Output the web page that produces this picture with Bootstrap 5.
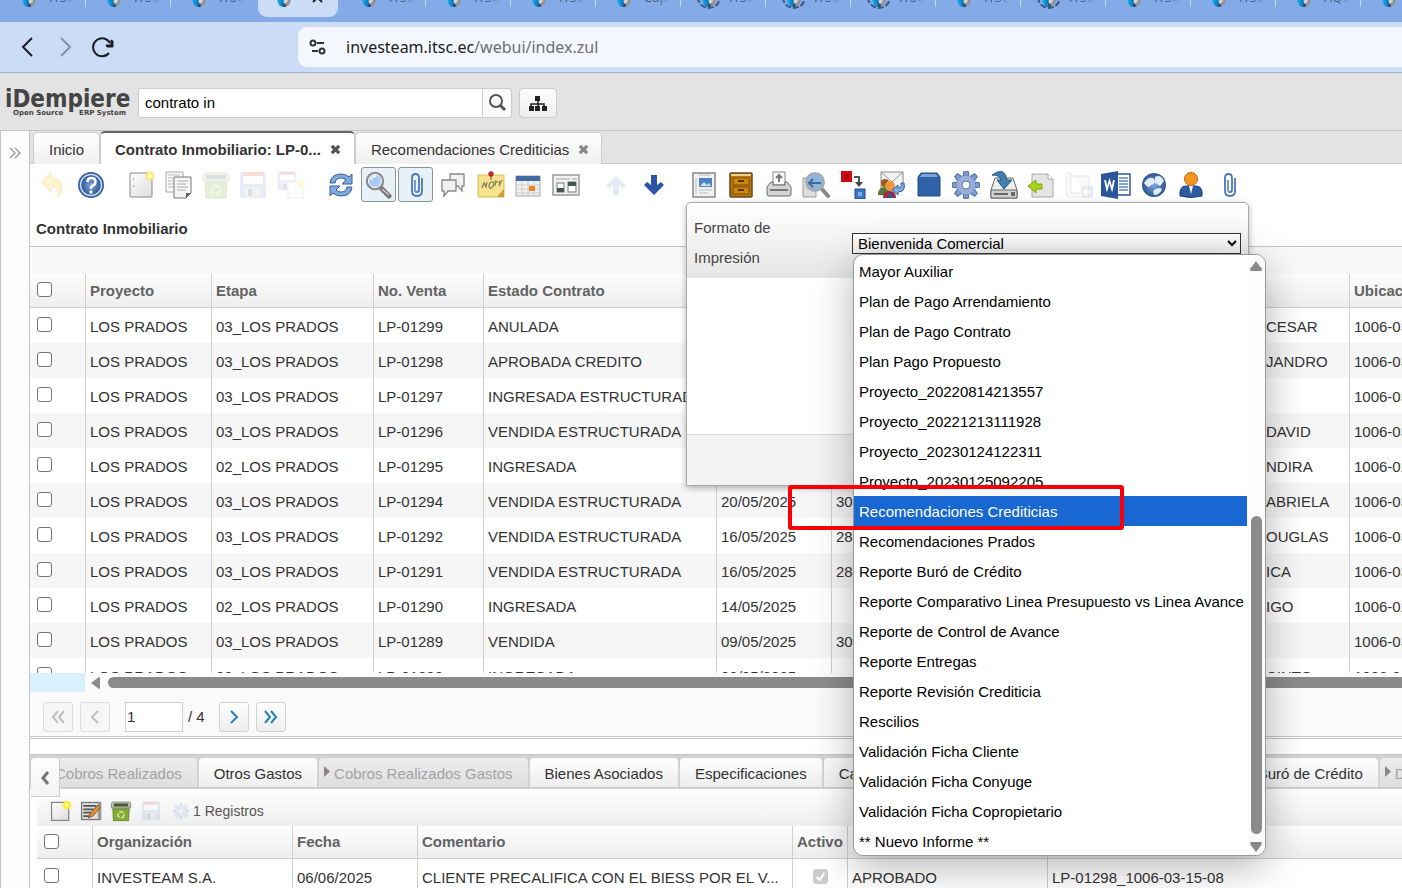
<!DOCTYPE html>
<html lang="es">
<head>
<meta charset="utf-8">
<meta name="viewport" content="width=device-width, initial-scale=1">
<title>iDempiere</title>
<link href="https://cdn.jsdelivr.net/npm/bootstrap@5.3.0/dist/css/bootstrap.min.css" rel="stylesheet">
<style>
  body { font-family: "Liberation Sans", Arial, sans-serif; font-size: 15px; line-height: 20px; color: #333; background: #fff; }
  button { font: inherit; color: inherit; }
  .app { height: 100vh; overflow: hidden; }

  /* browser chrome */
  .strip { height: 22px; background: #85aae8; padding-left: 1px; overflow: hidden; }
  .btab { flex: 0 0 85px; height: 22px; position: relative; padding-left: 18px; font: 13px/14px "Open Sans", sans-serif; color: #44597c; text-decoration: none; }
  .btab svg { width: 20px; height: 22px; flex: none; overflow: visible; }
  .btab span { margin: -10px 0 0 10px; white-space: nowrap; width: 26px; overflow: hidden; -webkit-mask-image: linear-gradient(90deg, #000 50%, transparent); mask-image: linear-gradient(90deg, #000 50%, transparent); }
  .btab::after { content: ""; position: absolute; right: 0; top: 0; width: 1px; height: 7px; background: #c9dbf6; }
  .btab.no-line::after { display: none; }
  .btab.current::before { content: ""; position: absolute; left: 2px; right: 3px; top: 0; height: 17px; background: #cbdcf6; border-radius: 0 0 9px 9px; }
  .btab.current svg { position: relative; }
  .addr { height: 51px; background: #cbdcf6; border-bottom: 1px solid #9fb4d6; }
  .addr-nav { width: 298px; padding-left: 16px; gap: 14px; }
  .addr-nav button, .plain { border: 0; background: none; padding: 0; }
  .addr-nav svg { display: block; width: 24px; height: 24px; }
  .url { height: 40px; background: #f4f7fd; border-radius: 9px 0 0 9px; padding-left: 10px; gap: 18px; font: 16px/22px "Noto Sans", "Open Sans", sans-serif; color: #6a6f78; }
  .url b { font-weight: 400; color: #1c1e22; }

  /* application header */
  .head { height: 57px; background: #e3e3e3; padding: 2px 0 0 5px; }
  .logo { width: 133px; font-family: "DejaVu Sans Condensed", "DejaVu Sans", sans-serif; font-stretch: condensed; font-weight: 700; font-size: 24px; line-height: 20px; color: #444; }
  .logo small { margin-left: 8px; font: 700 7px/8px "DejaVu Sans", sans-serif; width: 113px; display: flex; justify-content: space-between; }
  .find { width: 345px; height: 30px; border: 1px solid #ccc; border-radius: 3px 0 0 3px; padding: 0 6px; color: #000; background: #fff; }
  .find-btn { width: 29px; height: 30px; border: 1px solid #ccc; border-left: 0; border-radius: 0 3px 3px 0; background: #fafafa; padding: 0; }
  .map-btn { width: 38px; height: 30px; border: 1px solid #ccc; border-radius: 4px; background: linear-gradient(#fefefe, #eee); padding: 0; margin-left: 7px; }

  .rail { flex: 0 0 30px; background: #fcfcfc; border: solid #c5c5c5; border-width: 1px 1px 0 1px; padding-top: 11px; color: #999; }
  .main-col { border-top: 1px solid #c5c5c5; min-width: 0; }

  .wtabs { background: #e3e3e3; height: 33px; padding-left: 3px; border-bottom: 1px solid #ccc; }
  .wtab { height: 32px; margin-top: 1px; border: 1px solid #ccc; border-bottom: 0; border-radius: 5px 5px 0 0; background: linear-gradient(#fefefe, #f0f0f0); padding: 2px 15px 0; gap: 9px; color: #333; white-space: nowrap; }
  .wtab.on { height: 33px; margin-top: 0; border-top: 2px solid #666; background: #fff; font-weight: 700; padding: 2px 13px 0 14px; }
  .wtab.last { padding-right: 12px; }

  .tools { height: 39px; padding: 3px 0 0 5px; gap: 15px; position: relative; }
  .tgroup { display: flex; justify-content: space-between; flex: none; }
  .g2 { width: 73px; } .g5 { width: 185px; } .g7 { width: 260px; } .g15 { width: 560px; }
  .tgroup button { width: 35px; height: 35px; border: 1px solid transparent; border-radius: 3px; background: none; padding: 0; display: flex; align-items: center; justify-content: center; }
  .tgroup button.on { border-color: #8a949c; background: #e8f1f8; }
  .tgroup svg { width: 28px; height: 28px; flex: none; }
  .dim { opacity: .18; }

  .win-title { height: 44px; font-weight: 700; padding: 8px 6px 0; border-bottom: 1px solid #c5c5c5; }
  .group-bar { height: 27px; background: #f9f9f9; }

  /* data grids */
  .pane { height: 399px; overflow: hidden; }
  .dgrid { table-layout: fixed; border-collapse: separate; border-spacing: 0; width: 100%; }
  .dgrid th { height: 34px; padding: 0 4px; font-weight: 700; color: #636363; background: linear-gradient(#fefefe, #eee); border-bottom: 1px solid #cfcfcf; }
  .dgrid td { height: 35px; padding: 3px 4px 0; }
  .dgrid th, .dgrid td { white-space: nowrap; overflow: hidden; border-left: 1px solid #cfcfcf; }
  .dgrid th:first-child, .dgrid td:first-child { border-left: 0; padding: 0 7px; vertical-align: middle; }
  .dgrid tbody tr:nth-child(even) td { background: #f6f6f6; }
  .wide { min-width: 1469px; }
  .detail .dgrid th { height: 33px; }
  .tick { appearance: none; display: block; width: 15px; height: 15px; margin: 0 0 2px; border: 1px solid #767676; border-radius: 3px; background: #fff; }
  .tick:checked { border-color: #ccc; background: #ccc url("data:image/svg+xml,%3Csvg xmlns='http://www.w3.org/2000/svg' viewBox='0 0 13 13'%3E%3Cpath d='M2.5 7l3 3 5-7' fill='none' stroke='%23fff' stroke-width='2'/%3E%3C/svg%3E"); margin: 0 auto 4px; }

  .hscroll { height: 19px; background: #fcfcfc; }
  .hscroll i { flex: 0 0 55px; height: 19px; background: #d9f1fd; }
  .hscroll svg { flex: none; width: 9px; height: 12px; margin: 0 8px 0 6px; }
  .hscroll b { height: 11px; background: #8b8b8b; border-radius: 6px 0 0 6px; }
  .pager { height: 45px; background: #fafafa; border-bottom: 1px solid #c5c5c5; padding: 5px 0 0 13px; }
  .pager button { width: 30px; height: 30px; border: 1px solid #cfcfcf; border-radius: 3px; background: linear-gradient(#fefefe, #eee); padding: 0; margin-right: 7px; color: #2184ba; display: flex; align-items: center; justify-content: center; }
  .pager button:disabled { color: #c0c0c0; border-color: #ddd; background: #f6f6f6; }
  .pager input { width: 58px; height: 30px; border: 1px solid #cfcfcf; padding: 0 1px; margin: 0 5px 0 8px; color: #333; }
  .pager span { width: 31px; }
  .splitter { height: 17px; margin-top: 1px; border: solid #c5c5c5; border-width: 1px 0; background: #fff; }

  /* detail tabs */
  .dtabs { height: 34px; background: #d3d3d3; padding: 3px 0 0 10px; gap: 2px; border-bottom: 2px solid #cfcfcf; position: relative; }
  .dtab { flex: none; height: 29px; padding: 0 15px; border-radius: 4px 4px 0 0; background: linear-gradient(#fefefe, #eee); color: #333; line-height: 31px; text-decoration: none; position: relative; }
  .dtab.off { background: linear-gradient(#ededed, #dedede); color: #a2a2a2; }
  .dtab svg { position: absolute; left: 5px; top: 8px; width: 6px; height: 11px; }
  .spread { width: 417px; }
  .back { position: absolute; left: 1px; top: 3px; width: 29px; height: 39px; border: 1px solid #ccc; border-top: 0; border-left: 0; border-radius: 4px 4px 0 0; background: linear-gradient(#fefefe, #f3f3f3); padding: 0; z-index: 1; }
  .detail { margin-left: 7px; }
  .dtools { height: 37px; background: linear-gradient(#fff, #eee); padding: 6px 0 0 12px; font-size: 14px; color: #555; }
  .dtools button + button { margin-left: 6px; }
  .dtools svg { width: 24px; height: 24px; display: block; }

  /* print format dialog */
  .dialog-pop { position: absolute; left: 656px; top: 38px; width: 563px; height: 284px; z-index: 5; background: #fff; border: 1px solid #aaa; border-radius: 5px 5px 0 0; box-shadow: 0 2px 6px rgba(0,0,0,.3); }
  .dialog-top { height: 75px; background: linear-gradient(#fff, #e6e6e6); padding: 10px 7px 0 7px; border-radius: 5px 5px 0 0; }
  .dialog-top label { width: 158px; padding-right: 60px; line-height: 30px; color: #444; }
  .dialog-top select { height: 21px; margin-top: 20px; border: 1px solid #333; border-radius: 0; background: linear-gradient(#fff, #f0f0f0); font-size: 15px; line-height: 19px; padding: 0 1px; color: #000; }
  .dialog-foot { height: 51px; margin-top: 156px; background: #f3f3f3; border-top: 1px solid #d8d8d8; }
  .choices { position: absolute; left: 166px; top: 51px; width: 413px; height: 602px; background: #fff; border: 1px solid #999; border-radius: 10px; box-shadow: 0 10px 40px rgba(0,0,0,.3); overflow: hidden; display: flex; color: #000; }
  .choices ul { flex: 1; margin: 1px 0 0; padding: 0; list-style: none; }
  .choices li { height: 30px; line-height: 31px; padding-left: 5px; white-space: nowrap; }
  .choices li.sel { background: #1967d2; color: #fff; }
  .vscroll { flex: 0 0 18px; background: #fcfcfc; padding: 6px 0 3px; }
  .vscroll i { width: 11px; height: 318px; border-radius: 6px; background: #8b8b8b; margin-top: auto; margin-bottom: 8px; }
  .frame-mark { position: absolute; left: 101px; top: 282px; width: 336px; height: 45px; border: 4px solid #f80008; border-radius: 3px; z-index: 7; pointer-events: none; }
</style>
</head>
<body>
<svg width="0" height="0" class="position-absolute" aria-hidden="true">
  <defs>
    <linearGradient id="fav" x1="0" x2="1"><stop offset="0" stop-color="#12b4f6"/><stop offset=".4" stop-color="#0f7cc0"/><stop offset=".55" stop-color="#2b4258"/><stop offset=".7" stop-color="#999"/><stop offset="1" stop-color="#8b8b8b"/></linearGradient>
    <linearGradient id="paper" x2="1" y2="1"><stop stop-color="#fff"/><stop offset="1" stop-color="#dcdcdc"/></linearGradient>
    <radialGradient id="blueball"><stop stop-color="#7fa8dc"/><stop offset="1" stop-color="#2b5592"/></radialGradient>
    <symbol id="i-fav" viewBox="0 0 20 22"><path d="M3-4C3 3 5 7 10 7s7-4 7-11z" fill="url(#fav)"/><path d="M10-1c-1 3 0 4 1 5 2-1 3-3 3-5z" fill="#cfd3d8"/></symbol>
    <symbol id="i-favl" viewBox="0 0 20 22" overflow="visible"><use href="#i-fav" width="20" height="22"/><path d="M-1-3a11 11 0 0 0 22 0" fill="none" stroke="#40587f" stroke-width="2" stroke-dasharray="6 2"/></symbol>
    <symbol id="i-page" viewBox="0 0 28 28"><rect x="3" y="2" width="22" height="24" rx="1" fill="url(#paper)" stroke="#888"/><path d="M6 8h1M6 15h1" stroke="#aaa" stroke-width="2"/><circle cx="23" cy="5" r="4.500" fill="#f8ec75"/><circle cx="23" cy="5" r="2" fill="#fffce0"/></symbol>
    <symbol id="i-floppy" viewBox="0 0 28 28"><rect x="1" y="1" width="26" height="26" rx="2" fill="#7aa0dc"/><rect x="4" y="2" width="20" height="11" fill="#fff"/><rect x="4" y="1" width="20" height="4" fill="#e53b30"/><rect x="6" y="16" width="16" height="10" fill="#bbb"/><rect x="9" y="18" width="4" height="7" fill="#456"/></symbol>
    <symbol id="i-trash" viewBox="0 0 28 28"><path d="M3 11h22l-1 16H4z" fill="#86ac35" stroke="#59771d"/><path d="M1 5q0-3 3-3h20q3 0 3 3v5H1z" fill="#b5c7a0" stroke="#777"/><path d="M5 4h18l1 4H4z" fill="#49533f"/><circle cx="14" cy="19" r="4" fill="none" stroke="#d8ecb0" stroke-width="2" stroke-dasharray="6 2"/></symbol>
    <symbol id="i-clip" viewBox="0 0 28 28"><path d="M13 9v10q0 2 2 2t2-2V7q0-4-3.500-4T10 7v13q0 5 5 5t5-5V7" fill="none" stroke="#4a78b8" stroke-width="1.800"/><path d="M13 9v10q0 2 2 2" fill="none" stroke="#8fb1dd"/></symbol>
    <symbol id="i-gear" viewBox="0 0 28 28"><g fill="#7f9acb" stroke="#4a6ea9"><g id="tth"><path d="M11 5l1-5h4l1 5zM11 23l1 5h4l1-5z"/></g><use href="#tth" transform="rotate(45 14 14)"/><use href="#tth" transform="rotate(90 14 14)"/><use href="#tth" transform="rotate(135 14 14)"/></g><circle cx="14" cy="14" r="9.500" fill="#9aaed8"/><circle cx="14" cy="14" r="4" fill="#fff" stroke="#5b7bb3"/></symbol>
    <symbol id="i-x" viewBox="0 0 12 12"><path d="M2 2l8 8M10 2l-8 8" stroke="currentColor" stroke-width="3.600"/></symbol>
  </defs>
</svg>

<div class="app d-flex flex-column">
  <nav class="strip d-flex flex-shrink-0" aria-label="Pestañas del navegador">
    <a href="#" class="btab d-flex"><svg><use href="#i-fav"/></svg><span>ITSC</span></a>
    <a href="#" class="btab d-flex"><svg><use href="#i-fav"/></svg><span>ITSC</span></a>
    <a href="#" class="btab d-flex no-line"><svg><use href="#i-fav"/></svg><span>ITSC</span></a>
    <a href="#" class="btab d-flex no-line current"><svg><use href="#i-fav"/></svg><svg viewBox="0 0 20 22" class="ms-3"><path d="M3-7l9 9M12-7L3 2" stroke="#222" stroke-width="2"/></svg></a>
    <a href="#" class="btab d-flex"><svg><use href="#i-fav"/></svg><span>ITSC</span></a>
    <a href="#" class="btab d-flex"><svg><use href="#i-fav"/></svg><span>ITSC</span></a>
    <a href="#" class="btab d-flex"><svg><use href="#i-fav"/></svg><span>ITSC</span></a>
    <a href="#" class="btab d-flex"><svg><use href="#i-fav"/></svg><span>Capa</span></a>
    <a href="#" class="btab d-flex"><svg><use href="#i-favl"/></svg><span>ITSC</span></a>
    <a href="#" class="btab d-flex"><svg><use href="#i-favl"/></svg><span>ITSC</span></a>
    <a href="#" class="btab d-flex"><svg><use href="#i-favl"/></svg><span>ITSC</span></a>
    <a href="#" class="btab d-flex"><svg><use href="#i-fav"/></svg><span>ITSC</span></a>
    <a href="#" class="btab d-flex"><svg><use href="#i-favl"/></svg><span>ITSC</span></a>
    <a href="#" class="btab d-flex"><svg><use href="#i-fav"/></svg><span>ITSC</span></a>
    <a href="#" class="btab d-flex"><svg><use href="#i-fav"/></svg><span>ITSC</span></a>
    <a href="#" class="btab d-flex"><svg><use href="#i-fav"/></svg><span>AQUA</span></a>
    <a href="#" class="btab d-flex"><svg><use href="#i-fav"/></svg></a>
  </nav>
  <div class="addr d-flex align-items-center flex-shrink-0">
    <div class="addr-nav d-flex flex-shrink-0">
      <button type="button" aria-label="Atrás"><svg viewBox="0 0 24 24" fill="none" stroke="#1b1d21" stroke-width="2"><path d="M16 3l-9 9 9 9"/></svg></button>
      <button type="button" aria-label="Adelante"><svg viewBox="0 0 24 24" fill="none" stroke="#8290a8" stroke-width="2"><path d="M7 3l9 9-9 9"/></svg></button>
      <button type="button" aria-label="Recargar"><svg viewBox="0 0 24 24" fill="none" stroke="#1b1d21" stroke-width="2"><path d="M17 18a9 9 0 1 1 1-10"/><path d="M14 10h5V5l2 1v6h-6z" fill="#1b1d21" stroke-width="1"/></svg></button>
    </div>
    <div class="url d-flex align-items-center flex-grow-1">
      <svg width="20" height="20" viewBox="0 0 20 20" fill="none" stroke="#333" stroke-width="2"><circle cx="5" cy="6" r="2.500"/><path d="M9 6h7M4 14h6"/><circle cx="14" cy="14" r="2.500"/></svg>
      <span><b>investeam.itsc.ec</b>/webui/index.zul</span>
    </div>
  </div>

  <header class="head d-flex align-items-center flex-shrink-0">
    <div class="logo">iDempiere<small><span>Open Source</span><span>ERP System</span></small></div>
    <input class="find" type="text" value="contrato in" aria-label="Buscar">
    <button type="button" class="find-btn" aria-label="Buscar"><svg width="20" height="20" viewBox="0 0 20 20" fill="none" stroke="#555"><circle cx="9" cy="8" r="6" stroke-width="2"/><path d="M13 12l5 5" stroke-width="3"/></svg></button>
    <button type="button" class="map-btn" aria-label="Menú"><svg width="20" height="18" viewBox="0 0 20 18" fill="#222"><path d="M7 1h5v5H7zM1 11h5v5H1zM7 11h5v5H7zM14 11h5v5h-5z"/><path d="M10 6v6M3 12V9h13v3" fill="none" stroke="#222" stroke-width="1.500"/></svg></button>
  </header>

  <div class="d-flex flex-grow-1 overflow-hidden">
    <aside class="rail text-center"><button type="button" class="plain" aria-label="Expandir"><svg width="12" height="12" viewBox="0 0 12 12" fill="none" stroke="#999" stroke-width="1.300"><path d="M1 1l5 5-5 5M6 1l5 5-5 5"/></svg></button></aside>
    <main class="main-col flex-grow-1">
      <div class="wtabs d-flex">
        <div class="wtab d-flex align-items-center">Inicio</div>
        <div class="wtab on d-flex align-items-center">Contrato Inmobiliario: LP-0...<button type="button" class="plain d-flex" aria-label="Cerrar"><svg width="11" height="11" color="#555"><use href="#i-x"/></svg></button></div>
        <div class="wtab last d-flex align-items-center">Recomendaciones Crediticias<button type="button" class="plain d-flex" aria-label="Cerrar"><svg width="11" height="11" color="#888"><use href="#i-x"/></svg></button></div>
      </div>

      <div class="tools d-flex">
        <div class="tgroup g2">
          <button type="button" aria-label="Deshacer"><svg viewBox="0 0 28 28" opacity=".3"><path d="M2 11L12 1v5q11 1 11 12 0 5-4 8 1-11-7-10v5z" fill="#f5dc66" stroke="#e3c64d"/></svg></button>
          <button type="button" aria-label="Ayuda"><svg viewBox="0 0 28 28"><circle cx="14" cy="14" r="13" fill="#34609f"/><circle cx="14" cy="14" r="10.500" fill="url(#blueball)" stroke="#c9d9ee" stroke-width="1.500"/><path d="M10.500 11q0-4 4-4t4 4q0 2-2.500 3.500T14 18" fill="none" stroke="#fff" stroke-width="2.600"/><circle cx="14" cy="21" r="1.700" fill="#fff"/></svg></button>
        </div>
        <div class="tgroup g5">
          <button type="button" aria-label="Nuevo"><svg><use href="#i-page"/></svg></button>
          <button type="button" aria-label="Copiar"><svg viewBox="0 0 28 28"><path d="M2 1h17v20H2z" fill="#fafafa" stroke="#aaa"/><path d="M4 4h12M4 7h5M4 10h5M4 13h5M4 16h5" stroke="#bbb"/><path d="M10 6h17v16l-5 5H10z" fill="#f6f6f6" stroke="#777"/><path d="M13 10h11M13 13h9M13 16h11M13 19h9" stroke="#aaa"/><path d="M27 22l-5 5v-5z" fill="#666"/></svg></button>
          <button type="button" aria-label="Eliminar"><svg class="dim"><use href="#i-trash"/></svg></button>
          <button type="button" aria-label="Guardar"><svg class="dim"><use href="#i-floppy"/></svg></button>
          <button type="button" aria-label="Guardar y nuevo"><svg viewBox="0 0 28 28" class="dim"><use href="#i-floppy" width="20" height="20"/><rect x="11" y="11" width="15" height="16" fill="#f6f6f6" stroke="#aaa"/><circle cx="25" cy="14" r="4" fill="#f7e03a"/></svg></button>
        </div>
        <div class="tgroup g7">
          <button type="button" aria-label="Refrescar"><svg viewBox="0 0 28 28" fill="#80a9dd" stroke="#34609f"><path d="M3 12Q4 3 14 3q5 0 8 3l3-3v10H15l4-4q-2-2-5-2-5 0-6 5z"/><path d="M25 16q-1 9-11 9-5 0-8-3l-3 3V15h10l-4 4q2 2 5 2 5 0 6-5z"/></svg></button>
          <button type="button" class="on" aria-label="Buscar"><svg viewBox="0 0 28 28"><path d="M17 17l8 8" stroke="#777" stroke-width="5" stroke-linecap="round"/><path d="M18 18l7 6" stroke="#ccc" stroke-width="1.500"/><circle cx="11" cy="10" r="8" fill="#a9cbf3" stroke="#8b8b8b" stroke-width="2.500"/><circle cx="11" cy="10" r="6.500" fill="none" stroke="#fff"/><path d="M7 9q1-4 5-4" fill="none" stroke="#e9f4ff" stroke-width="2"/></svg></button>
          <button type="button" class="on" aria-label="Adjunto"><svg><use href="#i-clip"/></svg></button>
          <button type="button" aria-label="Chat"><svg viewBox="0 0 28 28" fill="#f2f2f2" stroke="#888" stroke-width="1.300"><path d="M11 3h14v12h-2v5l-4-5h-8z"/><path d="M3 9h14v11H9l-4 5v-5H3z"/></svg></button>
          <button type="button" aria-label="Nota"><svg viewBox="0 0 28 28"><path d="M1 4h26v22H1z" fill="#f6e38c" stroke="#d9bf5a"/><path d="M20 26l7-8v8z" fill="#c99b3d"/><path d="M5 17l2-5 2 4 1-5M12 16q0-5 3-5t1 4-4 1M17 10l4 1M19 10l-1 5M22 10l1 3 2-4M23 13l-1 2" fill="none" stroke="#777a55" stroke-width="1.200"/><circle cx="14" cy="3" r="2.700" fill="#c0283c"/><path d="M14 5v4" stroke="#a33"/></svg></button>
          <button type="button" aria-label="Calendario"><svg viewBox="0 0 28 28"><rect x="2" y="5" width="24" height="20" fill="#f1f1f1" stroke="#aaa"/><path d="M2 5h24v5H2z" fill="#41699f"/><path d="M2 14h24M2 18h24M2 22h24M8 10v15M14 10v15M20 10v15" stroke="#ccc"/><path d="M15 15h6v5h-6z" fill="#ee8420"/></svg></button>
          <button type="button" aria-label="Ficha"><svg viewBox="0 0 28 28"><rect x="1" y="4" width="26" height="20" fill="#f2f2f2" stroke="#999" stroke-width="1.500"/><path d="M4 8h14M20 8h5" stroke="#ccc" stroke-width="2"/><rect x="5" y="12" width="7" height="9" fill="#fff" stroke="#777"/><rect x="16" y="11" width="8" height="10" fill="#fff" stroke="#777"/><path d="M5 17h7v4H5zM16 11h8v4h-8z" fill="#455"/></svg></button>
        </div>
        <div class="tgroup g2">
          <button type="button" aria-label="Anterior"><svg viewBox="0 0 28 28"><path d="M14 5l10 10-3 2-4-3v10h-6V14l-4 3-3-2z" fill="#e4e9f6"/></svg></button>
          <button type="button" aria-label="Siguiente"><svg viewBox="0 0 28 28"><path d="M14 24L4 14l3-3 4 3V4h6v10l4-3 3 3z" fill="#2e54a8"/></svg></button>
        </div>
        <div class="tgroup g15">
          <button type="button" aria-label="Informe"><svg viewBox="0 0 28 28"><rect x="3" y="2" width="22" height="24" fill="#f2f2f2" stroke="#888" stroke-width="1.500"/><rect x="9" y="7" width="13" height="9" fill="#4d83c5"/><path d="M10 15l4-4 3 3 2-2 2 3z" fill="#cfe0ef"/><path d="M9 4h12M9 19h13M9 22h9M6 7v16" stroke="#bbb"/></svg></button>
          <button type="button" aria-label="Archivo"><svg viewBox="0 0 28 28"><rect x="3" y="2" width="22" height="24" rx="1" fill="#b87914" stroke="#694815" stroke-width="1.500"/><path d="M4 3h20v2H4z" fill="#ecd08d"/><rect x="6" y="7" width="16" height="7" fill="#ce850d" stroke="#7a5010"/><rect x="6" y="16" width="16" height="7" fill="#ce850d" stroke="#7a5010"/><path d="M11 10h6M11 19h6" stroke="#553505" stroke-width="2"/></svg></button>
          <button type="button" aria-label="Imprimir"><svg viewBox="0 0 28 28"><path d="M8 1h12v13H8z" fill="#fbfbfb" stroke="#888"/><path d="M14 11V4M11 7l3-3 3 3" fill="none" stroke="#777" stroke-width="2"/><path d="M2 16l4-5h2v3h12v-3h2l4 5v7q0 2-2 2H4q-2 0-2-2z" fill="#d4d4d4" stroke="#666"/><path d="M5 18h18v2H5z" fill="#777"/></svg></button>
          <button type="button" aria-label="Vista previa"><svg viewBox="0 0 28 28"><path d="M1 7h13v19H1z" fill="#ddd" stroke="#999"/><path d="M19 17l7 8" stroke="#888" stroke-width="4" stroke-linecap="round"/><circle cx="13" cy="11" r="9" fill="#8fb6de" stroke="#aaa" stroke-width="2"/><path d="M19 12H8M11 8l-4 4 4 4" fill="none" stroke="#47678f" stroke-width="2"/></svg></button>
          <button type="button" aria-label="Flujo"><svg viewBox="0 0 28 28"><rect x="1" y="0" width="11" height="11" fill="#d8060b"/><rect x="4" y="3" width="5" height="5" fill="#a80006"/><path d="M14 6h5v6" fill="none" stroke="#555" stroke-width="2"/><path d="M15 11h8l-4 5z" fill="#444"/><rect x="15" y="18" width="10" height="10" fill="#3a77c2" stroke="#174c8f"/><rect x="18" y="21" width="4" height="4" fill="#80b0e5"/></svg></button>
          <button type="button" aria-label="Solicitud"><svg viewBox="0 0 28 28"><path d="M4 1h22v18H4z" fill="#f2f2f2" stroke="#888"/><path d="M4 1l11 10L26 1" fill="none" stroke="#999"/><circle cx="8" cy="12" r="4" fill="#9b5a23"/><path d="M1 24q0-8 7-8 6 0 6 9z" fill="#52763b"/><circle cx="13" cy="15" r="5" fill="#f0973b"/><path d="M6 27q0-7 7-7 6 0 6 7z" fill="#a7293c"/><path d="M10 27l3-6 4 6z" fill="#3353a0"/><path d="M27 12q2 9-6 9v3l-6-5 6-5v3q4 0 3-5z" fill="#7eacdf" stroke="#346099"/></svg></button>
          <button type="button" aria-label="Producto"><svg viewBox="0 0 28 28"><path d="M6 2h16l3 4v19H3V6z" fill="#2f62a8" stroke="#234a85"/><path d="M7 3h14l2 3H5z" fill="#7ea3d4"/></svg></button>
          <button type="button" aria-label="Proceso"><svg><use href="#i-gear"/></svg></button>
          <button type="button" aria-label="Exportar"><svg viewBox="0 0 28 28"><path d="M5 7h18l4 12v8H1v-8z" fill="#ededed" stroke="#666"/><path d="M1 19h26v8H1z" fill="#d0d0d0" stroke="#666"/><path d="M4 23h14M22 21v4M24 21v4" stroke="#444" stroke-width="1.500"/><path d="M2 4q13-9 15 5h5l-8 9-7-9h4q-1-5-9-5z" fill="#3f80af" stroke="#24577e"/></svg></button>
          <button type="button" aria-label="Importar"><svg viewBox="0 0 28 28"><path d="M5 3h16l5 5v18H5z" fill="#e5e5e5" stroke="#aaa"/><path d="M21 3v5h5" fill="#fff" stroke="#aaa"/><path d="M1 15l8-6v4h6v5H9v4z" fill="#a5d514" stroke="#7fa80f"/></svg></button>
          <button type="button" aria-label="Importar CSV"><svg viewBox="0 0 28 28"><path d="M1 2h5v20h18v4H4q-3 0-3-3zM6 5h18v17" fill="#fafafa" stroke="#e8e8e8"/><rect x="16" y="15" width="12" height="12" rx="2" fill="#e4eaf0"/><path d="M26 21h-6M22 18l-3 3 3 3" stroke="#fff" stroke-width="2" fill="none"/></svg></button>
          <button type="button" aria-label="Word"><svg viewBox="0 0 28 28" overflow="visible"><path d="M14 3h14v21H14z" fill="#fff" stroke="#2b579a" stroke-width="1.500"/><path d="M17 7h9M17 10h9M17 13h9M17 16h9M17 19h9" stroke="#5d84bd" stroke-width="1.500"/><path d="M-1 3L16 0v28L-1 25z" fill="#2b579a"/><path d="M3 9l2 9 2.500-8L10 18l2-9" fill="none" stroke="#fff" stroke-width="1.800"/></svg></button>
          <button type="button" aria-label="Web"><svg viewBox="0 0 28 28"><circle cx="14" cy="14" r="12" fill="url(#blueball)"/><path d="M4 12q5-8 10-4 3 4-3 6-2 5-7-2zM15 6q6-3 9 4l-4 5-5-3zM13 20q5-5 9-2-2 6-8 6z" fill="#e3edf8"/></svg></button>
          <button type="button" aria-label="Usuario"><svg viewBox="0 0 28 28"><path d="M3 25q-1-10 6-10h10q7 0 6 10-11 3-22 0z" fill="#2d5ca2" stroke="#1d427d"/><path d="M12 15h4l-2 8z" fill="#fff"/><circle cx="14" cy="8" r="6.500" fill="#f59420" stroke="#bb6510"/></svg></button>
          <button type="button" aria-label="Adjuntos"><svg><use href="#i-clip"/></svg></button>
        </div>

        <section class="dialog-pop" aria-label="Formato de Impresión">
          <div class="dialog-top d-flex align-items-start">
            <label for="fmt">Formato de Impresión</label>
            <select id="fmt" class="flex-grow-1"><option>Bienvenida Comercial</option></select>
          </div>
          <div class="dialog-foot"></div>
          <div class="choices">
            <ul role="listbox" aria-label="Formatos">
              <li role="option">Mayor Auxiliar</li>
              <li role="option">Plan de Pago Arrendamiento</li>
              <li role="option">Plan de Pago Contrato</li>
              <li role="option">Plan Pago Propuesto</li>
              <li role="option">Proyecto_20220814213557</li>
              <li role="option">Proyecto_20221213111928</li>
              <li role="option">Proyecto_20230124122311</li>
              <li role="option">Proyecto_20230125092205</li>
              <li role="option" class="sel" aria-selected="true">Recomendaciones Crediticias</li>
              <li role="option">Recomendaciones Prados</li>
              <li role="option">Reporte Buró de Crédito</li>
              <li role="option">Reporte Comparativo Linea Presupuesto vs Linea Avance</li>
              <li role="option">Reporte de Control de Avance</li>
              <li role="option">Reporte Entregas</li>
              <li role="option">Reporte Revisión Crediticia</li>
              <li role="option">Rescilios</li>
              <li role="option">Validación Ficha Cliente</li>
              <li role="option">Validación Ficha Conyuge</li>
              <li role="option">Validación Ficha Copropietario</li>
              <li role="option">** Nuevo Informe **</li>
            </ul>
            <div class="vscroll d-flex flex-column align-items-center">
              <svg width="12" height="10" viewBox="0 0 12 10" fill="#8b8b8b"><path d="M6 0l6 8q0 2-1 2H1q-1 0-1-2z"/></svg>
              <i></i>
              <svg width="12" height="10" viewBox="0 0 12 10" fill="#8b8b8b"><path d="M6 10L0 2q0-2 1-2h10q1 0 1 2z"/></svg>
            </div>
          </div>
          <div class="frame-mark"></div>
        </section>
      </div>

      <div class="win-title d-flex align-items-center">Contrato Inmobiliario</div>
      <div class="group-bar"></div>

      <div class="pane">
        <table class="dgrid wide">
          <colgroup><col style="width:55px"><col style="width:126px"><col style="width:162px"><col style="width:110px"><col style="width:233px"><col style="width:115px"><col style="width:430px"><col style="width:88px"><col></colgroup>
          <thead><tr><th><input class="tick" type="checkbox" aria-label="Todos"></th><th>Proyecto</th><th>Etapa</th><th>No. Venta</th><th>Estado Contrato</th><th></th><th></th><th></th><th>Ubicación</th></tr></thead>
          <tbody>
            <tr><td><input class="tick" type="checkbox" aria-label="LP-01299"></td><td>LOS PRADOS</td><td>03_LOS PRADOS</td><td>LP-01299</td><td>ANULADA</td><td></td><td></td><td>CESAR</td><td>1006-03-15-09</td></tr>
            <tr><td><input class="tick" type="checkbox" aria-label="LP-01298"></td><td>LOS PRADOS</td><td>03_LOS PRADOS</td><td>LP-01298</td><td>APROBADA CREDITO</td><td></td><td></td><td>JANDRO</td><td>1006-03-15-08</td></tr>
            <tr><td><input class="tick" type="checkbox" aria-label="LP-01297"></td><td>LOS PRADOS</td><td>03_LOS PRADOS</td><td>LP-01297</td><td>INGRESADA ESTRUCTURADA</td><td></td><td></td><td></td><td>1006-03-15-07</td></tr>
            <tr><td><input class="tick" type="checkbox" aria-label="LP-01296"></td><td>LOS PRADOS</td><td>03_LOS PRADOS</td><td>LP-01296</td><td>VENDIDA ESTRUCTURADA</td><td></td><td></td><td>DAVID</td><td>1006-03-15-06</td></tr>
            <tr><td><input class="tick" type="checkbox" aria-label="LP-01295"></td><td>LOS PRADOS</td><td>02_LOS PRADOS</td><td>LP-01295</td><td>INGRESADA</td><td></td><td></td><td>NDIRA</td><td>1006-02-15-05</td></tr>
            <tr><td><input class="tick" type="checkbox" aria-label="LP-01294"></td><td>LOS PRADOS</td><td>03_LOS PRADOS</td><td>LP-01294</td><td>VENDIDA ESTRUCTURADA</td><td>20/05/2025</td><td>30</td><td>ABRIELA</td><td>1006-03-15-04</td></tr>
            <tr><td><input class="tick" type="checkbox" aria-label="LP-01292"></td><td>LOS PRADOS</td><td>03_LOS PRADOS</td><td>LP-01292</td><td>VENDIDA ESTRUCTURADA</td><td>16/05/2025</td><td>28</td><td>OUGLAS</td><td>1006-03-15-03</td></tr>
            <tr><td><input class="tick" type="checkbox" aria-label="LP-01291"></td><td>LOS PRADOS</td><td>03_LOS PRADOS</td><td>LP-01291</td><td>VENDIDA ESTRUCTURADA</td><td>16/05/2025</td><td>28</td><td>ICA</td><td>1006-03-15-02</td></tr>
            <tr><td><input class="tick" type="checkbox" aria-label="LP-01290"></td><td>LOS PRADOS</td><td>02_LOS PRADOS</td><td>LP-01290</td><td>INGRESADA</td><td>14/05/2025</td><td></td><td>IGO</td><td>1006-02-15-01</td></tr>
            <tr><td><input class="tick" type="checkbox" aria-label="LP-01289"></td><td>LOS PRADOS</td><td>03_LOS PRADOS</td><td>LP-01289</td><td>VENDIDA</td><td>09/05/2025</td><td>30</td><td></td><td>1006-03-14-09</td></tr>
            <tr><td><input class="tick" type="checkbox" aria-label="LP-01288"></td><td>LOS PRADOS</td><td>03_LOS PRADOS</td><td>LP-01288</td><td>INGRESADA</td><td>08/05/2025</td><td></td><td>CINTO</td><td>1006-03-14-08</td></tr>
          </tbody>
        </table>
      </div>
      <div class="hscroll d-flex align-items-center"><i></i><svg viewBox="0 0 9 12"><path d="M0 6l8-6q1 0 1 1v10q0 1-1 1z" fill="#8b8b8b"/></svg><b class="flex-grow-1"></b></div>
      <div class="pager d-flex align-items-center">
        <button type="button" disabled aria-label="Primera"><svg width="14" height="14" viewBox="0 0 14 14" fill="none" stroke="currentColor" stroke-width="2"><path d="M7 1L2 7l5 6M13 1L8 7l5 6"/></svg></button>
        <button type="button" disabled aria-label="Anterior"><svg width="14" height="14" viewBox="0 0 14 14" fill="none" stroke="currentColor" stroke-width="2"><path d="M10 1L4 7l6 6"/></svg></button>
        <input type="text" value="1" aria-label="Página"><span>/ 4</span>
        <button type="button" aria-label="Siguiente"><svg width="14" height="14" viewBox="0 0 14 14" fill="none" stroke="currentColor" stroke-width="2"><path d="M4 1l6 6-6 6"/></svg></button>
        <button type="button" aria-label="Última"><svg width="14" height="14" viewBox="0 0 14 14" fill="none" stroke="currentColor" stroke-width="2"><path d="M1 1l5 6-5 6M7 1l5 6-5 6"/></svg></button>
      </div>
      <div class="splitter"></div>

      <nav class="dtabs d-flex" aria-label="Detalle">
        <button type="button" class="back" aria-label="Pestañas anteriores"><svg width="10" height="14" viewBox="0 0 10 14" fill="none" stroke="#777" stroke-width="3"><path d="M8 1L3 7l5 6"/></svg></button>
        <a href="#" class="dtab off text-nowrap">Cobros Realizados</a>
        <a href="#" class="dtab text-nowrap">Otros Gastos</a>
        <a href="#" class="dtab off text-nowrap"><svg viewBox="0 0 6 11"><path d="M0 0l6 5.500L0 11z" fill="#888"/></svg>Cobros Realizados Gastos</a>
        <a href="#" class="dtab text-nowrap">Bienes Asociados</a>
        <a href="#" class="dtab text-nowrap">Especificaciones</a>
        <a href="#" class="dtab text-nowrap spread">Ca</a>
        <a href="#" class="dtab text-nowrap">Buró de Crédito</a>
        <a href="#" class="dtab off text-nowrap"><svg viewBox="0 0 6 11"><path d="M0 0l6 5.500L0 11z" fill="#888"/></svg>Detalle</a>
      </nav>
      <div class="detail">
        <div class="dtools d-flex align-items-center">
          <button type="button" class="plain" aria-label="Nuevo"><svg viewBox="0 0 28 28"><rect x="3" y="4" width="20" height="21" fill="url(#paper)" stroke="#888" stroke-width="1.500"/><circle cx="21" cy="7" r="5" fill="#f8ee35"/><circle cx="21" cy="7" r="2" fill="#fff9b0"/></svg></button>
          <button type="button" class="plain" aria-label="Editar"><svg viewBox="0 0 28 28"><rect x="3" y="4" width="22" height="20" fill="#ddd" stroke="#777" stroke-width="1.500"/><path d="M5 8h15M5 12h12M5 16h9M5 20h7" stroke="#555" stroke-width="2"/><path d="M22 4h4v20h-4z" fill="#999"/><path d="M11 22l2-5 9-10 3 3-9 10z" fill="#e89036" stroke="#7a4a1b"/></svg></button>
          <button type="button" class="plain" aria-label="Eliminar"><svg viewBox="-2 -2 32 32"><use href="#i-trash" width="28" height="28"/></svg></button>
          <button type="button" class="plain" aria-label="Guardar"><svg viewBox="-3 -3 34 34" class="dim"><use href="#i-floppy" width="28" height="28"/></svg></button>
          <button type="button" class="plain" aria-label="Proceso"><svg viewBox="-7 -7 42 42" class="dim"><use href="#i-gear" width="28" height="28"/></svg></button>
          <span>1 Registros</span>
        </div>
        <table class="dgrid">
          <colgroup><col style="width:55px"><col style="width:200px"><col style="width:125px"><col style="width:375px"><col style="width:55px"><col style="width:200px"><col></colgroup>
          <thead><tr><th><input class="tick" type="checkbox" aria-label="Todos"></th><th>Organización</th><th>Fecha</th><th>Comentario</th><th>Activo</th><th></th><th></th></tr></thead>
          <tbody><tr><td><input class="tick" type="checkbox" aria-label="Registro 1"></td><td>INVESTEAM S.A.</td><td>06/06/2025</td><td>CLIENTE PRECALIFICA CON EL BIESS POR EL V...</td><td><input class="tick" type="checkbox" checked disabled aria-label="Activo"></td><td>APROBADO</td><td>LP-01298_1006-03-15-08</td></tr></tbody>
        </table>
      </div>
    </main>
  </div>
</div>
<script src="https://cdn.jsdelivr.net/npm/bootstrap@5.3.0/dist/js/bootstrap.bundle.min.js"></script>
</body>
</html>
